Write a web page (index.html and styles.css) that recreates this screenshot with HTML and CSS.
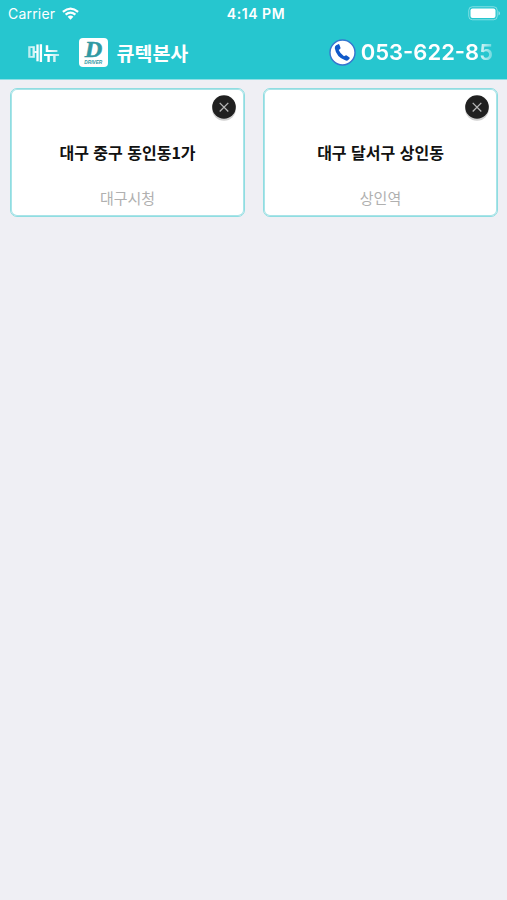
FILE: index.html
```html
<!DOCTYPE html>
<html lang="ko">
<head>
<meta charset="utf-8">
<title>큐텍본사</title>
<link rel="stylesheet" href="styles.css">
</head>
<body>
<header class="header">
  <div class="status">
    <div class="carrier"><span class="carrier-name">Carrier</span>
      <svg class="wifi" width="17" height="13" viewBox="0 0 17 13" fill="none" stroke="#fff" stroke-width="2.2"><path d="M.9 4.8Q8.5-1.7 16.1 4.8M3.6 7.7Q8.5 3.5 13.4 7.7"/><path d="M5.6 9.8Q8.5 7.3 11.4 9.8L8.5 12.8Z" fill="#fff" stroke="none"/></svg>
    </div>
    <div class="time">4:14 PM</div>
    <svg class="battery" width="33" height="15" viewBox="0 0 33 15"><rect x=".75" y=".75" width="28.5" height="13" rx="3.6" fill="none" stroke="#fff" stroke-opacity=".42"/><rect x="2.5" y="2.5" width="25" height="9.5" rx="2" fill="#fff"/><path d="M30.5 5v4.6q1.5-.7 1.5-2.3t-1.5-2.3" fill="#fff" fill-opacity=".5"/></svg>
  </div>
  <nav class="nav">
    <span class="menu">메뉴</span>
    <svg class="logo" width="29" height="29" viewBox="0 0 29 29"><rect width="29" height="29" rx="4" fill="#fff"/><text class="logo-letter" x="14.6" y="19.3" text-anchor="middle" textLength="17.5" lengthAdjust="spacingAndGlyphs">D</text><text class="logo-word" x="14.3" y="25.6" text-anchor="middle" textLength="18" lengthAdjust="spacingAndGlyphs">DRIVER</text></svg>
    <span class="company">큐텍본사</span>
    <div class="call">
      <svg width="27" height="27" viewBox="0 0 27 27"><circle cx="13.5" cy="13.5" r="12.5" fill="#fff" stroke="#3575cf" stroke-width="1.4"/><path d="M7.1 6.2 9.3 5.2Q10 4.9 10.4 5.7L11.5 8.8Q11.7 9.5 11 10L9.7 11.1Q11.2 14.8 15 17.2L16.5 16.4Q17.1 16.1 17.7 16.5L20.5 18.4Q21.1 18.9 20.6 19.6L19 21.2Q18 22 16.2 21.3 7.3 18 5.8 9.2 5.6 7 7.1 6.2Z" fill="#1059c9"/></svg>
      <span class="phone">053-622-85</span>
    </div>
  </nav>
</header>
<main class="cards">
  <section class="card">
    <svg class="close" width="26" height="29" viewBox="0 0 26 29"><circle cx="13" cy="14.8" r="12" fill="#d0d0d0"/><circle cx="13" cy="13" r="11.8" fill="#202020"/><path d="m8.7 8.9 8.6 8.6m0-8.6-8.6 8.6" stroke="#b5b5b5" stroke-width="1.3"/></svg>
    <h2>대구 중구 동인동1가</h2>
    <p>대구시청</p>
  </section>
  <section class="card">
    <svg class="close" width="26" height="29" viewBox="0 0 26 29"><circle cx="13" cy="14.8" r="12" fill="#d0d0d0"/><circle cx="13" cy="13" r="11.8" fill="#202020"/><path d="m8.7 8.9 8.6 8.6m0-8.6-8.6 8.6" stroke="#b5b5b5" stroke-width="1.3"/></svg>
    <h2>대구 달서구 상인동</h2>
    <p>상인역</p>
  </section>
</main>
</body>
</html>
```
FILE: styles.css
```css
* { box-sizing: border-box; }
body {
  margin: 0;
  min-height: 900px;
  background: #efeff4;
  font-family: Inter, "Noto Sans CJK KR", sans-serif;
}
.header {
  height: 80px;
  background: #26c6cf;
  border-bottom: 1px solid #8fdfe5;
  color: #fff;
}
.status {
  height: 27px;
  padding: 0 6px 0 8px;
  display: grid;
  grid-template-columns: 1fr auto 1fr;
  align-items: center;
  font-size: 14px;
  line-height: 27px;
}
.carrier { display: flex; align-items: center; gap: 7px; }
.carrier-name { letter-spacing: .2px; }
.time { padding-left: 3px; font-weight: 600; letter-spacing: .55px; }
.battery { justify-self: end; }
.nav {
  height: 50px;
  padding: 0 14px 0 27px;
  display: flex;
  align-items: center;
  white-space: nowrap;
}
.menu, .company {
  font-family: "Noto Sans CJK KR", sans-serif;
  font-weight: 700;
}
.menu {
  width: 33px;
  font-size: 18px;
  letter-spacing: -.2px;
  -webkit-mask-image: linear-gradient(90deg, rgba(0,0,0,.6), #000 35%, #000 65%, rgba(0,0,0,.6));
  mask-image: linear-gradient(90deg, rgba(0,0,0,.6), #000 35%, #000 65%, rgba(0,0,0,.6));
}
.logo { margin: 0 8.5px 0 19px; }
.logo-letter { font: italic 700 23px "Liberation Serif", serif; fill: #3099a3; stroke: #3099a3; stroke-width: .5; }
.logo-word { font: italic 700 5px "Liberation Sans", sans-serif; fill: #3099a3; }
.company { font-size: 19.5px; }
.call { margin-left: auto; display: flex; align-items: center; gap: 5px; }
.phone {
  font-size: 22px;
  font-weight: 600;
  -webkit-mask-image: linear-gradient(90deg, #000 87%, rgba(0,0,0,.3));
  mask-image: linear-gradient(90deg, #000 87%, rgba(0,0,0,.3));
}
.cards {
  padding: 8px 9px 0 10px;
  display: grid;
  grid-template-columns: 1fr 1fr;
  gap: 18px;
}
.card {
  position: relative;
  height: 129px;
  padding-top: 51px;
  border: 1px solid #8fdde1;
  box-shadow: inset 0 0 0 1px #a9e4e8;
  border-radius: 7px;
  background: #fff;
  font-family: "Noto Sans CJK KR", sans-serif;
  text-align: center;
}
.close { position: absolute; top: 5px; right: 7px; }
.card h2 { margin: 0; font-size: 16px; line-height: 24px; font-weight: 700; color: #111; }
.card p { margin: 22px 0 0; font-size: 15px; line-height: 24px; color: #b0b0b0; }
```
